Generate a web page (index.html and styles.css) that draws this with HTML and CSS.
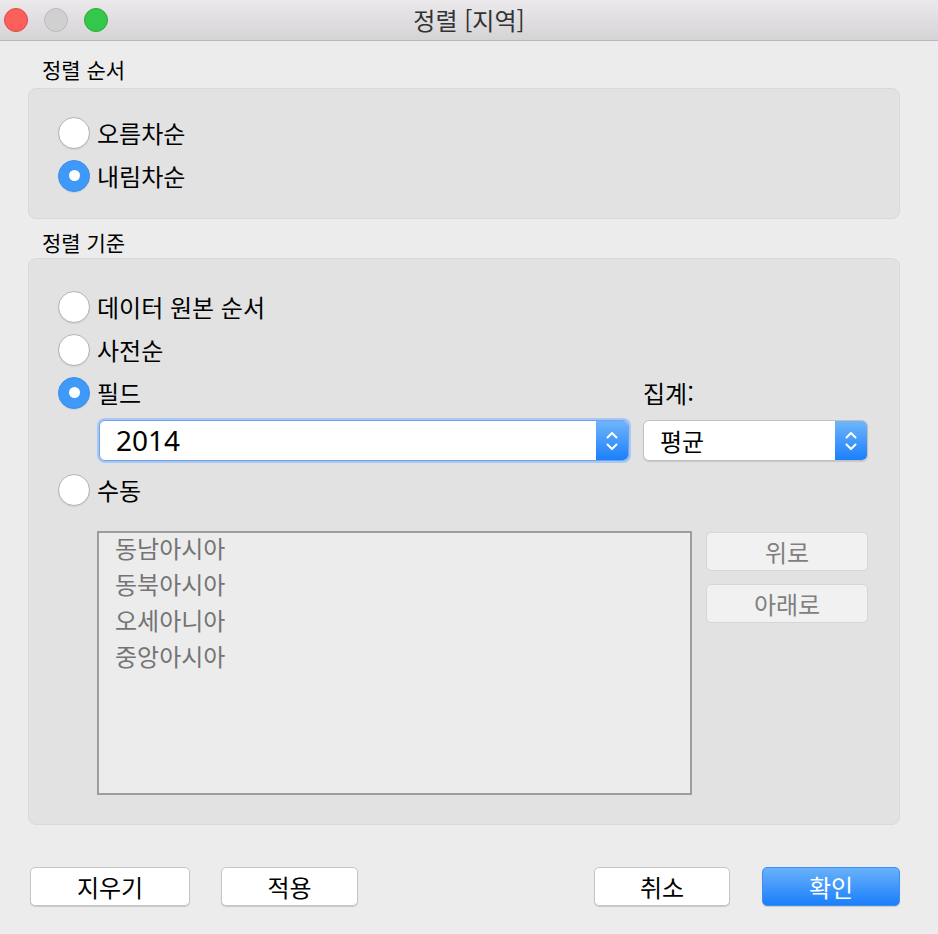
FILE: index.html
```html
<!DOCTYPE html>
<html lang="ko">

<head>
    <meta charset="UTF-8">
    <meta name="viewport" content="width=device-width, initial-scale=1.0">
    <title>정렬 [지역]</title>
    <link rel="stylesheet" href="styles.css">
</head>

<body>
    <div class="window">
        <header class="titlebar">
            <div class="lights">
                <span class="light red"></span>
                <span class="light gray"></span>
                <span class="light green"></span>
            </div>
            <h1 class="title">정렬 [지역]</h1>
        </header>

        <main class="content">
            <div class="section-label first">정렬 순서</div>
            <div class="group order">
                <label class="radio-row">
                    <span class="radio"></span>
                    <span>오름차순</span>
                </label>
                <label class="radio-row">
                    <span class="radio checked"></span>
                    <span>내림차순</span>
                </label>
            </div>

            <div class="section-label">정렬 기준</div>
            <div class="group basis">
                <label class="radio-row">
                    <span class="radio"></span>
                    <span>데이터 원본 순서</span>
                </label>
                <label class="radio-row">
                    <span class="radio"></span>
                    <span>사전순</span>
                </label>
                <div class="field-row">
                    <label class="radio-row grow">
                        <span class="radio checked"></span>
                        <span>필드</span>
                    </label>
                    <div class="agg-label">집계:</div>
                </div>
                <div class="select-row">
                    <div class="select wide focus">
                        <span class="select-value num">2014</span>
                        <span class="stepper">
                            <svg width="14" height="24" viewBox="0 0 14 24">
                                <path d="M2.5 8.5 L7 4 L11.5 8.5 M2.5 15.5 L7 20 L11.5 15.5" fill="none" stroke="#fff" stroke-width="2" stroke-linecap="round" stroke-linejoin="round"/>
                            </svg>
                        </span>
                    </div>
                    <div class="select narrow">
                        <span class="select-value">평균</span>
                        <span class="stepper">
                            <svg width="14" height="24" viewBox="0 0 14 24">
                                <path d="M2.5 8.5 L7 4 L11.5 8.5 M2.5 15.5 L7 20 L11.5 15.5" fill="none" stroke="#fff" stroke-width="2" stroke-linecap="round" stroke-linejoin="round"/>
                            </svg>
                        </span>
                    </div>
                </div>
                <label class="radio-row manual">
                    <span class="radio"></span>
                    <span>수동</span>
                </label>
                <div class="manual-area">
                    <div class="listbox">
                        <ul class="items">
                            <li>동남아시아</li>
                            <li>동북아시아</li>
                            <li>오세아니아</li>
                            <li>중앙아시아</li>
                        </ul>
                    </div>
                    <div class="move-buttons">
                        <button class="btn disabled">위로</button>
                        <button class="btn disabled">아래로</button>
                    </div>
                </div>
            </div>

            <footer class="actions">
                <button class="btn clear">지우기</button>
                <button class="btn apply">적용</button>
                <div class="spacer"></div>
                <button class="btn cancel">취소</button>
                <button class="btn primary">확인</button>
            </footer>
        </main>
    </div>
</body>

</html>
```

FILE: styles.css
```css
body {
    margin: 0;
    padding: 0;
    width: 938px;
    height: 934px;
    overflow: hidden;
    background-color: #ececec;
    font-family: "Noto Sans CJK KR", "Noto Sans", sans-serif;
    color: #000;
}

.window {
    display: flex;
    flex-direction: column;
    height: 934px;
}

/* title bar */

.titlebar {
    position: relative;
    height: 40px;
    border-bottom: 1px solid #b9b9b9;
    background: linear-gradient(#ebe9eb, #d5d3d5);
    display: flex;
    align-items: center;
    justify-content: center;
}

.lights {
    position: absolute;
    left: 4px;
    top: 8px;
    display: flex;
    gap: 16px;
}

.light {
    width: 22px;
    height: 22px;
    border-radius: 50%;
    border: 1px solid;
}

.red {
    background: #fc605b;
    border-color: #de4843;
}

.gray {
    background: #d1d0d1;
    border-color: #bdbcbd;
}

.green {
    background: #34c84a;
    border-color: #27a93a;
}

.title {
    margin: 0;
    font-size: 24px;
    font-weight: 400;
    color: #333;
    line-height: 40px;
}

/* body */

.content {
    flex: 1;
    display: flex;
    flex-direction: column;
    padding: 0 38px 0 28px;
}

.section-label {
    font-size: 21px;
    line-height: 28px;
    padding: 9px 0 0 14px;
    margin-bottom: 2px;
}

.section-label.first {
    padding-top: 14px;
    margin-bottom: 5px;
}

.group {
    background: #e2e2e2;
    border: 1px solid #d9d9d9;
    border-radius: 8px;
    display: flex;
    flex-direction: column;
}

.group.order {
    padding: 22px 31px 0 29px;
    box-sizing: content-box;
    height: 107px;
}

.group.basis {
    padding: 26px 31px 0 29px;
    height: 539px;
}

.radio-row {
    display: flex;
    align-items: center;
    gap: 7px;
    height: 43px;
    font-size: 24px;
}

.radio {
    width: 30px;
    height: 30px;
    border-radius: 50%;
    background: #fff;
    border: 1px solid #b3b3b3;
    box-shadow: 0 1px 1px rgba(0, 0, 0, 0.08);
    display: flex;
    align-items: center;
    justify-content: center;
    flex-shrink: 0;
}

.radio.checked {
    background: #3e99f8;
    border-color: #3a8ff0;
}

.radio.checked::after {
    content: "";
    width: 11px;
    height: 11px;
    border-radius: 50%;
    background: #fff;
}

.field-row {
    display: flex;
    align-items: center;
}

.grow {
    flex: 1;
}

.agg-label {
    width: 225px;
    font-size: 24px;
}

.select-row {
    display: flex;
    gap: 14px;
    margin: 6px 0 0 40px;
}

.select {
    display: flex;
    height: 39px;
    background: #fff;
    border: 1px solid #c1c1c1;
    border-radius: 6px;
    overflow: hidden;
    box-sizing: content-box;
}

.select.wide {
    width: 528px;
    margin-left: 1px;
    border-color: #6fa2e8;
    box-shadow: 0 0 0 2px #a8c8f1;
}

.select.narrow {
    width: 223px;
    box-shadow: 0 1px 1px rgba(0, 0, 0, 0.12);
}

.select-value {
    flex: 1;
    font-size: 24px;
    line-height: 39px;
    padding-left: 16px;
}

.select-value.num {
    font-family: "Noto Sans", sans-serif;
    font-size: 28px;
    padding-left: 16px;
}

.stepper {
    width: 32px;
    background: linear-gradient(#6fb5fb, #1b7ffb);
    display: flex;
    align-items: center;
    justify-content: center;
}

.radio-row.manual {
    margin-top: 7px;
}

.manual-area {
    display: flex;
    gap: 14px;
    margin: 20px 0 0 39px;
}

.listbox {
    width: 592px;
    height: 260px;
    background: #ececec;
    border: 2px solid #9d9d9d;
}

.items {
    list-style: none;
    margin: -3px 0 0;
    padding: 0 0 0 16px;
}

.items li {
    font-size: 24px;
    line-height: 36px;
    color: #747474;
}

.move-buttons {
    display: flex;
    flex-direction: column;
    gap: 13px;
    padding-top: 1px;
}

.btn {
    font-family: "Noto Sans CJK KR", "Noto Sans", sans-serif;
    font-size: 24px;
    height: 39px;
    padding: 0;
    background: #fff;
    border: 1px solid #c6c6c6;
    border-radius: 5px;
    box-shadow: 0 1px 1px rgba(0, 0, 0, 0.15);
    color: #000;
}

.btn.disabled {
    width: 162px;
    background: #f1f1f1;
    border-color: #d6d6d6;
    box-shadow: none;
    color: #808080;
}

/* bottom bar */

.actions {
    display: flex;
    margin-top: 42px;
    padding-left: 2px;
}

.clear {
    width: 160px;
}

.apply {
    width: 137px;
    margin-left: 31px;
}

.spacer {
    flex: 1;
}

.cancel {
    width: 136px;
}

.primary {
    width: 138px;
    margin-left: 32px;
    background: linear-gradient(#69b1fb, #1a7ffb);
    border-color: #3d8ff5;
    color: #fff;
}
```
